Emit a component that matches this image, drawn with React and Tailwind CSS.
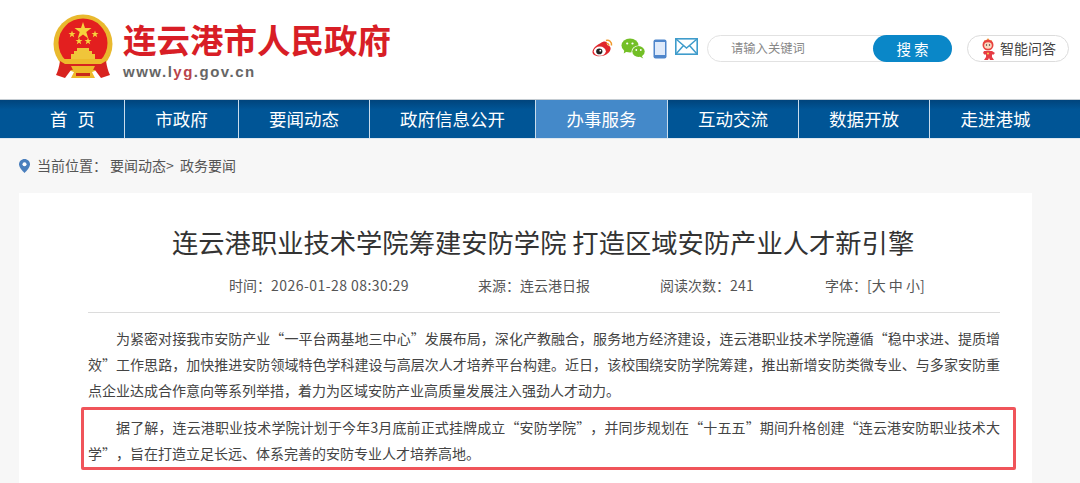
const cjk = { fontFamily: '"Noto Sans CJK SC", "Liberation Sans", sans-serif' };

function Emblem() {
  return (
    <svg width="62" height="66" viewBox="0 0 62 66" className="block">
      <circle cx="30" cy="30" r="29.500" fill="#e9b92e" />
      <circle cx="30" cy="29" r="24.500" fill="#e31f1f" />
      <polygon points="30,8 32,14 38.500,14 33.300,17.900 35.300,24.500 30,20.400 24.700,24.500 26.700,17.900 21.500,14 28,14" fill="#f6d33c" />
      <polygon points="19,16.500 19.900,19 22.500,19 20.400,20.600 21.200,23.200 19,21.700 16.800,23.200 17.600,20.600 15.500,19 18.100,19" fill="#f6d33c" />
      <polygon points="42,16.500 42.900,19 45.500,19 43.400,20.600 44.200,23.200 42,21.700 39.800,23.200 40.600,20.600 38.500,19 41.100,19" fill="#f6d33c" />
      <polygon points="26,23.500 26.900,26 29.500,26 27.400,27.600 28.200,30.200 26,28.700 23.800,30.200 24.600,27.600 22.500,26 25.100,26" fill="#f6d33c" />
      <polygon points="35,23.500 35.900,26 38.500,26 36.400,27.600 37.200,30.200 35,28.700 32.800,30.200 33.600,27.600 31.500,26 34.100,26" fill="#f6d33c" />
      <path d="M24 34h12v3h3v3h3v6H18v-6h3v-3h3z" fill="#f0c53a" />
      <path d="M9 45h42v5H9z" fill="#eeba2c" />
      <path d="M7 47c-1 6-2 10-4 14l9 3 6-8 9-1 3 2 3-2 9 1 6 8 9-3c-2-4-3-8-4-14l-5 3H12z" fill="#d8231f" />
      <path d="M18 52h24l-3 6 3 6H18l3-6z" fill="#eeb92b" />
      <path d="M23 59h14v3H23z" fill="#c8281c" />
    </svg>
  );
}

function Weibo() {
  return (
    <svg width="23" height="21" viewBox="0 0 23 21" className="block">
      <path d="M9 5.500C13 2.800 16 3 16.200 6c0 1 .1 1.200 1.200 1.500 3 1 3 4.500-.2 7.500C13.500 18.500 6 19.500 2.500 16.500-.5 13.500 3.500 8 9 5.500z" fill="#e0262c" />
      <ellipse cx="8.800" cy="13.200" rx="6" ry="4.600" fill="#fff" />
      <ellipse cx="8.300" cy="13.400" rx="3.100" ry="2.800" fill="#222" />
      <circle cx="9.300" cy="12.700" r=".9" fill="#fff" />
      <path d="M15 2.500c3-1 6 1.500 5.500 5" fill="none" stroke="#f0982a" strokeWidth="1.500" />
      <path d="M15.500 5.500c1.500-.3 2.500.7 2.300 2.200" fill="none" stroke="#f0982a" strokeWidth="1.300" />
    </svg>
  );
}

function Wechat() {
  return (
    <svg width="25" height="21" viewBox="0 0 25 21" className="block">
      <ellipse cx="9" cy="7.500" rx="8.500" ry="7" fill="#73bf26" />
      <path d="M3.500 11.500l-.8 4 4-2.500z" fill="#73bf26" />
      <ellipse cx="17.500" cy="13.500" rx="7" ry="6" fill="#fff" />
      <ellipse cx="17.500" cy="13.500" rx="6.200" ry="5.400" fill="#73bf26" />
      <path d="M20.500 17.500l1.800 3-3.800-2z" fill="#73bf26" />
      <circle cx="6.200" cy="5.500" r="1.100" fill="#fff" />
      <circle cx="11.500" cy="5.500" r="1.100" fill="#fff" />
      <circle cx="15.300" cy="12" r=".9" fill="#fff" />
      <circle cx="19.800" cy="12" r=".9" fill="#fff" />
    </svg>
  );
}

function Phone() {
  return (
    <svg width="14" height="20" viewBox="0 0 14 20" className="block">
      <rect x=".5" y=".5" width="13" height="19" rx="2" fill="#4f86cb" />
      <rect x="2" y="3" width="10" height="13" fill="#dfeafa" />
    </svg>
  );
}

function Mail() {
  return (
    <svg width="23" height="17" viewBox="0 0 23 17" className="block">
      <rect x=".8" y=".8" width="21.400" height="15.400" fill="#fff" stroke="#3f9ccb" strokeWidth="1.600" />
      <path d="M1 1l10.500 9L22 1M1 16l7.500-8.500M22 16l-7.500-8.500" fill="none" stroke="#3f9ccb" strokeWidth="1.500" />
    </svg>
  );
}

function Mascot() {
  return (
    <svg width="18" height="24" viewBox="0 0 18 24" className="block">
      <path d="M5 3l2 1 2-3 2 3 2-1-1 4H6z" fill="#f4b13c" />
      <circle cx="9" cy="8" r="5.500" fill="#e8433f" />
      <ellipse cx="9" cy="8.500" rx="3.800" ry="3.300" fill="#fbd9c0" />
      <circle cx="7.500" cy="8" r=".7" fill="#333" />
      <circle cx="10.500" cy="8" r=".7" fill="#333" />
      <path d="M5 14h8l3 2-2 2-1-1v3l2 3h-4l-1-2-1 2H5l2-3v-3l-1 1-2-2z" fill="#e63b45" />
      <circle cx="9" cy="16.500" r="1" fill="#fbd34a" />
    </svg>
  );
}

const navs = [
  ['首 页', 'w-[125px] pl-[50px] justify-start [word-spacing:6px] border-r', false],
  ['市政府', 'w-[114px] justify-center border-r', false],
  ['要闻动态', 'w-[131px] justify-center border-r', false],
  ['政府信息公开', 'w-[166px] justify-center border-r', false],
  ['办事服务', 'w-[132px] justify-center border-r', true],
  ['互动交流', 'w-[131px] justify-center border-r', false],
  ['数据开放', 'w-[131px] justify-center border-r', false],
  ['走进港城', 'w-[131px] justify-center', false],
];

export default function App() {
  return (
    <div className="w-[1080px] h-[483px] overflow-hidden bg-[#f7f7f7] [text-spacing-trim:space-all]" style={cjk}>
      <header className="h-[99px] bg-white flex items-start">
        <div className="ml-[53px] mt-[14px]"><Emblem /></div>
        <div className="ml-[8px] mt-[19px]">
          <div className="text-[33.500px] leading-[40px] font-bold text-[#d81e26] whitespace-nowrap">连云港市人民政府</div>
          <div className="mt-[3px] text-[15px] leading-[20px] font-bold tracking-[1.500px] text-[#666]" style={{ fontFamily: '"Liberation Sans", sans-serif' }}>
            www.<span>l</span><span className="text-[#b8434a]">yg</span>.gov.cn
          </div>
        </div>
        <div className="ml-[200px] mt-[38px] flex items-center">
          <Weibo />
          <div className="ml-[7px]"><Wechat /></div>
          <div className="ml-[7px]"><Phone /></div>
          <div className="ml-[8px] -mt-[5px]"><Mail /></div>
        </div>
        <div className="ml-[9px] mt-[35px] w-[245px] h-[27px] rounded-full border border-[#e2e2e2] flex items-center justify-between">
          <span className="ml-[23px] text-[12.300px] text-[#888]">请输入关键词</span>
          <span className="w-[79px] h-[27px] -mr-px rounded-full bg-[#0a87c8] text-white text-[14.500px] flex items-center justify-center">搜 索</span>
        </div>
        <div className="ml-[15px] mt-[35px] w-[102px] h-[27px] rounded-full border border-[#dcdcdc] flex items-center pl-[11px] gap-[3px]">
          <Mascot />
          <span className="text-[14px] text-[#444] whitespace-nowrap">智能问答</span>
        </div>
      </header>

      <nav className="h-[40px] flex border-t border-[#c5ccd2] bg-gradient-to-b from-[#00447c] via-[#005596] via-[25%] to-[#005596] border-b border-b-[#dfe8f0]">
        {navs.map(([t, w, active], i) => (
          <div
            key={i}
            className={`${w} flex items-center text-white text-[17.500px] whitespace-pre border-[#c9dcec] ${active ? 'bg-[#4489c9]' : ''}`}
          >
            {t}
          </div>
        ))}
      </nav>

      <div className="h-[54px] flex items-center pl-[19px] pb-[1px] text-[14px] text-[#555]">
        <svg width="11" height="14" viewBox="0 0 11 14" className="block mr-[7px]">
          <path d="M5.500 0C2.500 0 0 2.400 0 5.300 0 9 5.500 14 5.500 14S11 9 11 5.300C11 2.400 8.500 0 5.500 0z" fill="#4a7fbd" />
          <circle cx="5.500" cy="5.200" r="2" fill="#fff" />
        </svg>
        <span>当前位置：</span>
        <span className="ml-[3px] [word-spacing:3px]">要闻动态&gt; 政务要闻</span>
      </div>

      <main className="ml-[19px] w-[1013px] bg-white h-[300px]">
        <h1 className="pl-[153px] pt-[30px] text-[26.300px] leading-[38px] text-[#333] font-normal whitespace-nowrap">
          连云港职业技术学院筹建安防学院 打造区域安防产业人才新引擎
        </h1>
        <div className="mt-[12px] ml-[69px] mr-[32px] h-[40px] border-b border-[#dcdcdc] flex text-[14px] text-[#555] leading-[24px] whitespace-nowrap">
          <span className="ml-[141px] w-[249px]">时间：<span className="tracking-[0.450px]">2026-01-28 08:30:29</span></span>
          <span className="w-[182px]">来源：连云港日报</span>
          <span className="w-[165px]">阅读次数：<span className="tracking-[0.200px]">241</span></span>
          <span>字体：[大 中 小]</span>
        </div>
        <div className="ml-[69px] mr-[32px] mt-[12px] text-[14px] leading-[26px] text-[#444]">
          <p className="indent-[28px] text-justify">
            为紧密对接我市安防产业“一平台两基地三中心”发展布局，深化产教融合，服务地方经济建设，连云港职业技术学院遵循“稳中求进、提质增效”工作思路，加快推进安防领域特色学科建设与高层次人才培养平台构建。近日，该校围绕安防学院筹建，推出新增安防类微专业、与多家安防重点企业达成合作意向等系列举措，着力为区域安防产业高质量发展注入强劲人才动力。
          </p>
          <p className="-ml-[7px] -mr-[16px] mt-[4px] pl-[4px] pr-[13px] pt-[4px] pb-[1px] border-[3px] border-[#f0545a] rounded-[2px] indent-[28px] text-justify">
            据了解，连云港职业技术学院计划于今年3月底前正式挂牌成立“安防学院”，并同步规划在“十五五”期间升格创建“连云港安防职业技术大学”，旨在打造立足长远、体系完善的安防专业人才培养高地。
          </p>
        </div>
      </main>
    </div>
  );
}
